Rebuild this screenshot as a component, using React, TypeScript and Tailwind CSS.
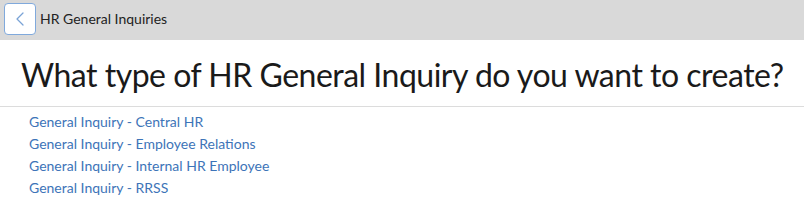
import { ChevronLeft } from "lucide-react";

const inquiryTypes = [
  "General Inquiry - Central HR",
  "General Inquiry - Employee Relations",
  "General Inquiry - Internal HR Employee",
  "General Inquiry - RRSS",
];

export default function App() {
  return (
    <div
      className="min-h-screen bg-white text-[#1a1a1a]"
      style={{ fontFamily: "Lato, 'Open Sans', sans-serif" }}
    >
      <header className="h-10 bg-[#d9d9d9] flex items-start pt-[3px] pl-1 gap-1">
        <button className="w-8 h-8 bg-white border border-[#80a9dc] rounded-[4px] flex items-center justify-center text-[#7aa3d6]">
          <ChevronLeft className="w-6 h-6" strokeWidth={1.25} />
        </button>
        <span className="text-[14px] leading-8 text-[#222]">HR General Inquiries</span>
      </header>

      <h1 className="text-[32px] leading-[38px] tracking-[-0.5px] whitespace-nowrap pt-[16px] pb-[12px] pl-[21px] border-b border-[#dcdcdc]">
        What type of HR General Inquiry do you want to create?
      </h1>

      <ul className="pl-[29px] pt-[4px]">
        {inquiryTypes.map((t) => (
          <li key={t} className="h-[22px] leading-[22px] text-[14px]">
            <a href="#" className="text-[#3d74b8]">
              {t}
            </a>
          </li>
        ))}
      </ul>
    </div>
  );
}
